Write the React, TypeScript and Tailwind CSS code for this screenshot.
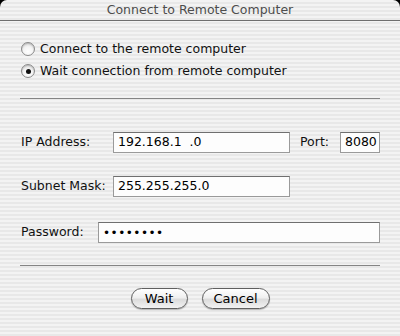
import React from 'react';

const stripes =
    'bg-[repeating-linear-gradient(to_bottom,#f3f3f3_0px,#f3f3f3_2px,#e8e8e8_2px,#e8e8e8_4px)]';

function Radio({ checked, label }: { checked?: boolean; label: string }) {
    return (
        <div className="flex items-center h-[18px] gap-[5px]">
            <div className="w-[14px] h-[14px] rounded-full border border-[#8a8a8a] bg-[radial-gradient(circle_at_50%_70%,#ffffff_0%,#f4f4f4_45%,#c9c9c9_100%)] shadow-[inset_0_1px_1px_rgba(0,0,0,0.15)] flex items-center justify-center">
                {checked && <div className="w-[5px] h-[5px] rounded-full bg-[#111]" />}
            </div>
            <span>{label}</span>
        </div>
    );
}

function Field({ value, className }: { value: string; className: string }) {
    return (
        <div
            className={`h-[21px] border border-[#9a9a9a] border-t-[#6f6f6f] bg-[#fdfdfd] pl-[4px] flex items-center whitespace-pre text-black ${className}`}
        >
            {value}
        </div>
    );
}

function AquaButton({ label, className }: { label: string; className: string }) {
    return (
        <button
            className={`h-[21px] rounded-full border border-[#5f5f5f] bg-[linear-gradient(to_bottom,#ffffff_0%,#f0f0f0_45%,#dcdcdc_55%,#f2f2f2_100%)] shadow-[0_1px_1px_rgba(0,0,0,0.25)] text-black text-[13px] leading-none flex items-center justify-center ${className}`}
        >
            {label}
        </button>
    );
}

export default function App() {
    return (
        <div className="w-[400px] h-[336px] bg-black font-['DejaVu_Sans',sans-serif] text-[12.5px] text-[#111]">
            <div className={`w-full h-full rounded-t-[7px] overflow-hidden flex flex-col ${stripes}`}>
                {/* Title bar */}
                <div className="h-[21px] flex items-center justify-center text-[12.5px] text-[#4d4d4d] border-b border-[#6e6e6e] shrink-0">
                    Connect to Remote Computer
                </div>

                <div className="flex flex-col px-[20px]">
                    <div className="flex flex-col gap-[4px] mt-[19px] pl-[1px]">
                        <Radio label="Connect to the remote computer" />
                        <Radio checked label="Wait connection from remote computer" />
                    </div>

                    <div className="mt-[18px] border-t border-[#858585]" />

                    <div className="flex items-center mt-[33px]">
                        <span className="w-[93px] pl-[1px]">IP Address:</span>
                        <Field value="192.168.1  .0" className="w-[177px]" />
                        <span className="ml-[10px] w-[40px]">Port:</span>
                        <Field value="8080" className="w-[40px] pl-[2px]" />
                    </div>

                    <div className="flex items-center mt-[23px]">
                        <span className="w-[93px] pl-[1px]">Subnet Mask:</span>
                        <Field value="255.255.255.0" className="w-[177px]" />
                    </div>

                    <div className="flex items-center mt-[25px]">
                        <span className="w-[78px] pl-[1px]">Password:</span>
                        <Field value="••••••••" className="w-[282px] text-[12px] tracking-[0.5px]" />
                    </div>

                    <div className="mt-[22px] border-t border-[#858585]" />

                    <div className="flex justify-center gap-[14px] mt-[22px]">
                        <AquaButton label="Wait" className="w-[57px]" />
                        <AquaButton label="Cancel" className="w-[68px]" />
                    </div>
                </div>
            </div>
        </div>
    );
}
